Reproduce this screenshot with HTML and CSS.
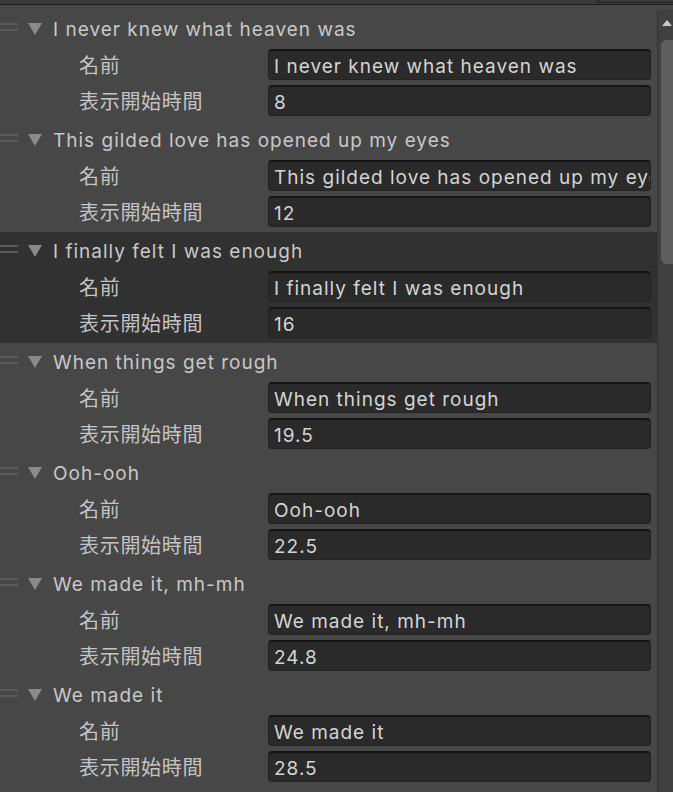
FILE: index.html
```html
<!DOCTYPE html>
<html lang="ja">
<head>
<meta charset="utf-8">
<title>List</title>
<link rel="stylesheet" href="styles.css">
</head>
<body>
<div class="topbar"><div class="topbox"></div></div>
<div class="main">
  <div class="list">
    <div class="item">
      <div class="head"><span class="handle"></span><span class="tri"></span><span class="title">I never knew what heaven was</span></div>
      <div class="row"><span class="label">名前</span><div class="field">I never knew what heaven was</div></div>
      <div class="row"><span class="label">表示開始時間</span><div class="field">8</div></div>
    </div>
    <div class="item">
      <div class="head"><span class="handle"></span><span class="tri"></span><span class="title">This gilded love has opened up my eyes</span></div>
      <div class="row"><span class="label">名前</span><div class="field">This gilded love has opened up my eyes</div></div>
      <div class="row"><span class="label">表示開始時間</span><div class="field">12</div></div>
    </div>
    <div class="item selected">
      <div class="head"><span class="handle"></span><span class="tri"></span><span class="title">I finally felt I was enough</span></div>
      <div class="row"><span class="label">名前</span><div class="field">I finally felt I was enough</div></div>
      <div class="row"><span class="label">表示開始時間</span><div class="field">16</div></div>
    </div>
    <div class="item">
      <div class="head"><span class="handle"></span><span class="tri"></span><span class="title">When things get rough</span></div>
      <div class="row"><span class="label">名前</span><div class="field">When things get rough</div></div>
      <div class="row"><span class="label">表示開始時間</span><div class="field">19.5</div></div>
    </div>
    <div class="item">
      <div class="head"><span class="handle"></span><span class="tri"></span><span class="title">Ooh-ooh</span></div>
      <div class="row"><span class="label">名前</span><div class="field">Ooh-ooh</div></div>
      <div class="row"><span class="label">表示開始時間</span><div class="field">22.5</div></div>
    </div>
    <div class="item">
      <div class="head"><span class="handle"></span><span class="tri"></span><span class="title">We made it, mh-mh</span></div>
      <div class="row"><span class="label">名前</span><div class="field">We made it, mh-mh</div></div>
      <div class="row"><span class="label">表示開始時間</span><div class="field">24.8</div></div>
    </div>
    <div class="item">
      <div class="head"><span class="handle"></span><span class="tri"></span><span class="title">We made it</span></div>
      <div class="row"><span class="label">名前</span><div class="field">We made it</div></div>
      <div class="row"><span class="label">表示開始時間</span><div class="field">28.5</div></div>
    </div>
  </div>
  <div class="scrollbar">
    <span class="arrow"></span>
    <div class="thumb"></div>
  </div>
</div>
</body>
</html>
```
FILE: styles.css
```css
html, body {
  margin: 0;
  padding: 0;
  height: 100%;
  overflow: hidden;
  background: #474747;
}
body {
  font-family: Inter, "Noto Sans CJK JP", sans-serif;
  font-size: 19px;
  letter-spacing: 1px;
  color: #c8c8c8;
}
.topbar {
  height: 4px;
  background: #3a3a3a;
  border-bottom: 1px solid #1c1c1c;
  display: flex;
  justify-content: flex-end;
}
.topbox {
  width: 75px;
  height: 2px;
  border-left: 1px solid #252525;
  border-bottom: 1px solid #252525;
  border-bottom-left-radius: 4px;
  background: #383838;
}
.main {
  display: flex;
  height: 787px;
}
.list {
  flex: 1;
  padding-top: 5px;
}
.item {
  height: 111px;
  display: flex;
  flex-direction: column;
}
.item.selected {
  background: #313131;
}
.head {
  height: 39px;
  display: flex;
  align-items: center;
}
.handle {
  width: 18px;
  height: 8px;
  border-top: 2px solid #5b5b5b;
  border-bottom: 2px solid #5b5b5b;
  box-sizing: border-box;
  margin-top: -5px;
  flex-shrink: 0;
}
.tri {
  width: 0;
  height: 0;
  border-left: 7.5px solid transparent;
  border-right: 7.5px solid transparent;
  border-top: 12px solid #8a8a8a;
  margin-left: 10px;
  margin-top: -1px;
  flex-shrink: 0;
}
.title {
  margin-left: 11px;
  margin-top: -1px;
  white-space: nowrap;
}
.row {
  display: flex;
  align-items: center;
  height: 31px;
  margin-bottom: 5px;
}
.label {
  width: 189px;
  padding-left: 79px;
  font-size: 20px;
  letter-spacing: 0.7px;
  color: #c4c4c4;
  flex-shrink: 0;
}
.field {
  width: 383px;
  height: 31px;
  box-sizing: border-box;
  background: #2a2a2a;
  border: 1px solid #222222;
  border-top: 2px solid #141414;
  border-radius: 4px;
  padding-left: 5px;
  padding-top: 2px;
  line-height: 27px;
  color: #d4d4d4;
  white-space: nowrap;
  overflow: hidden;
}
.scrollbar {
  width: 15px;
  margin-top: 5px;
  border-left: 1px solid #353535;
  background: #404040;
  display: flex;
  flex-direction: column;
  align-items: flex-end;
}
.arrow {
  width: 0;
  height: 0;
  border-left: 5.5px solid transparent;
  border-right: 5.5px solid transparent;
  border-bottom: 6px solid #c8c8c8;
  margin-top: 10px;
  margin-right: 1px;
}
.thumb {
  width: 12px;
  height: 224px;
  margin-top: 14px;
  background: #5f5f5f;
  border-radius: 6px 0 0 6px;
}
```
